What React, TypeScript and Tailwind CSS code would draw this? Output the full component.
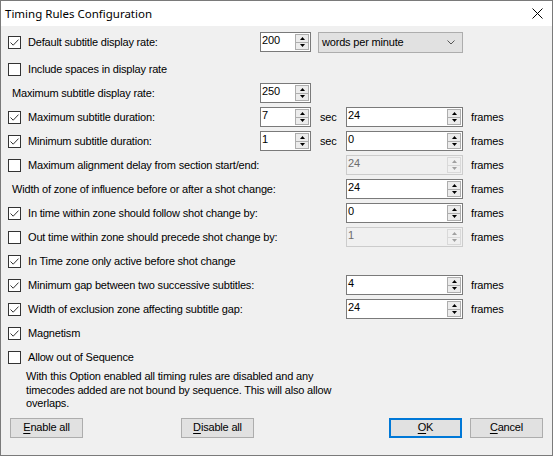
import React from "react";

function Check({ checked }: { checked?: boolean }) {
  return (
    <span className="flex h-[13px] w-[13px] shrink-0 items-center justify-center border border-[#333333] bg-white">
      {checked && (
        <svg width="11" height="11" viewBox="0 0 11 11">
          <path d="M1.5 5.5 L4.2 8.2 L9.5 2.6" stroke="#333333" strokeWidth="1" fill="none" />
        </svg>
      )}
    </span>
  );
}

function Arrow({ up, color }: { up?: boolean; color: string }) {
  return (
    <svg width="5" height="3" viewBox="0 0 5 3">
      <path d={up ? "M0 3 L2.5 0 L5 3 Z" : "M0 0 L5 0 L2.5 3 Z"} fill={color} />
    </svg>
  );
}

function NumBox({
  value,
  wide,
  disabled,
}: {
  value: string;
  wide?: boolean;
  disabled?: boolean;
}) {
  const arrow = disabled ? "#a0a0a0" : "#000000";
  return (
    <div
      className={
        "flex h-[20px] shrink-0 border " +
        (wide ? "w-[117px] " : "w-[51px] ") +
        (disabled ? "border-[#cccccc] bg-[#f0f0f0] text-[#6d6d6d]" : "border-[#7a7a7a] bg-white text-black")
      }
    >
      <span className="flex-1 pl-[1px] pt-[1px] leading-[13px]">{value}</span>
      <div
        className={
          "my-[1px] mr-[1px] flex w-[14px] flex-col border " +
          (disabled ? "border-[#d9d9d9] bg-[#f0f0f0]" : "border-[#adadad] bg-[#ececec]")
        }
      >
        <div
          className={
            "flex flex-1 items-center justify-center border-b " +
            (disabled ? "border-[#d9d9d9]" : "border-[#adadad]")
          }
        >
          <Arrow up color={arrow} />
        </div>
        <div className="flex flex-1 items-center justify-center">
          <Arrow color={arrow} />
        </div>
      </div>
    </div>
  );
}

function Label({
  text,
  check,
  checked,
  w,
}: {
  text: string;
  check?: boolean;
  checked?: boolean;
  w: string;
}) {
  return (
    <div className={"flex shrink-0 items-center whitespace-nowrap " + w}>
      {check ? (
        <>
          <Check checked={checked} />
          <span className="ml-[7px]">{text}</span>
        </>
      ) : (
        <span className="pl-[4px]">{text}</span>
      )}
    </div>
  );
}

function Frames() {
  return <span className="ml-[8px]">frames</span>;
}

function Sec() {
  return <span className="w-[35px] shrink-0 pl-[9px]">sec</span>;
}

function Btn({ k, rest, def, cls }: { k: string; rest: string; def?: boolean; cls: string }) {
  return (
    <div
      className={
        "flex h-[20px] w-[73px] items-center justify-center bg-[#e1e1e1] " +
        (def ? "border-2 border-[#0078d7] " : "border border-[#adadad] ") +
        cls
      }
    >
      <span>
        <span className="underline underline-offset-[2px]">{k}</span>
        {rest}
      </span>
    </div>
  );
}

export default function App() {
  const row = "flex h-[24px] items-center";
  return (
    <div className="h-[456px] w-[553px] border border-[#7a7a7a] bg-[#f0f0f0] font-['Liberation_Sans',Arial,sans-serif] text-[11px] tracking-[-0.18px] text-black">
      <div className="flex h-[25px] items-center justify-between bg-white pl-[4px] pr-[9px]">
        <span className="font-['Noto_Sans',sans-serif] text-[11.5px] tracking-normal">
          Timing Rules Configuration
        </span>
        <svg width="11" height="11" viewBox="0 0 11 11">
          <path d="M0.5 0.5 L10.5 10.5 M10.5 0.5 L0.5 10.5" stroke="#000000" strokeWidth="1" />
        </svg>
      </div>

      <div className="flex flex-col pl-[7px] pt-[4px]">
        <div className={row}>
          <Label check checked w="w-[252px]" text="Default subtitle display rate:" />
          <NumBox value="200" />
          <div className="ml-[7px] flex h-[21px] w-[145px] items-center justify-between border border-[#adadad] bg-[#e1e1e1] pl-[3px] pr-[7px]">
            <span>words per minute</span>
            <svg width="8" height="5" viewBox="0 0 8 5">
              <path d="M0.5 0.5 L4 4 L7.5 0.5" stroke="#555555" strokeWidth="1" fill="none" />
            </svg>
          </div>
        </div>
        <div className={row + " mt-[3px]"}>
          <Label check w="w-[252px]" text="Include spaces in display rate" />
        </div>
        <div className={row}>
          <Label w="w-[252px]" text="Maximum subtitle display rate:" />
          <NumBox value="250" />
        </div>
        <div className={row}>
          <Label check checked w="w-[252px]" text="Maximum subtitle duration:" />
          <NumBox value="7" />
          <Sec />
          <NumBox value="24" wide />
          <Frames />
        </div>
        <div className={row}>
          <Label check checked w="w-[252px]" text="Minimum subtitle duration:" />
          <NumBox value="1" />
          <Sec />
          <NumBox value="0" wide />
          <Frames />
        </div>
        <div className={row}>
          <Label check w="w-[338px]" text="Maximum alignment delay from section start/end:" />
          <NumBox value="24" wide disabled />
          <Frames />
        </div>
        <div className={row}>
          <Label w="w-[338px]" text="Width of zone of influence before or after a shot change:" />
          <NumBox value="24" wide />
          <Frames />
        </div>
        <div className={row}>
          <Label check checked w="w-[338px]" text="In time within zone should follow shot change by:" />
          <NumBox value="0" wide />
          <Frames />
        </div>
        <div className={row}>
          <Label check w="w-[338px]" text="Out time within zone should precede shot change by:" />
          <NumBox value="1" wide disabled />
          <Frames />
        </div>
        <div className={row}>
          <Label check checked w="w-[338px]" text="In Time zone only active before shot change" />
        </div>
        <div className={row}>
          <Label check checked w="w-[338px]" text="Minimum gap between two successive subtitles:" />
          <NumBox value="4" wide />
          <Frames />
        </div>
        <div className={row}>
          <Label check checked w="w-[338px]" text="Width of exclusion zone affecting subtitle gap:" />
          <NumBox value="24" wide />
          <Frames />
        </div>
        <div className={row}>
          <Label check checked w="w-[338px]" text="Magnetism" />
        </div>
        <div className={row}>
          <Label check w="w-[338px]" text="Allow out of Sequence" />
        </div>
        <p className="mt-[1px] pl-[18px] leading-[13.5px]">
          With this Option enabled all timing rules are disabled and any
          <br />
          timecodes added are not bound by sequence. This will also allow
          <br />
          overlaps.
        </p>
        <div className="mt-[7px] flex">
          <Btn k="E" rest="nable all" cls="ml-[2px]" />
          <Btn k="D" rest="isable all" cls="ml-[98px]" />
          <Btn k="O" rest="K" def cls="ml-[135px]" />
          <Btn k="C" rest="ancel" cls="ml-[8px]" />
        </div>
      </div>
    </div>
  );
}
